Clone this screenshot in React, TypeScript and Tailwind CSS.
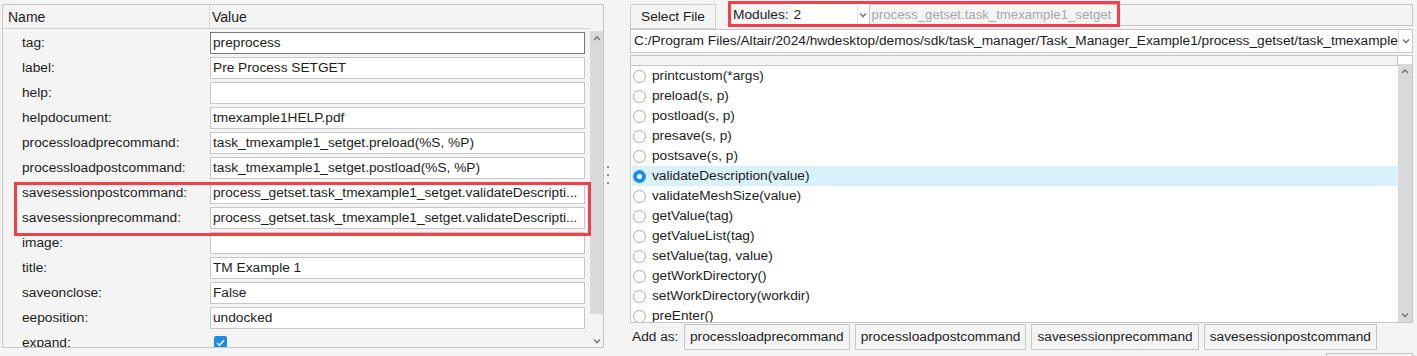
import React from "react";

const fields: { label: string; value?: string; focus?: boolean; check?: boolean }[] = [
  { label: "tag:", value: "preprocess", focus: true },
  { label: "label:", value: "Pre Process SETGET" },
  { label: "help:", value: "" },
  { label: "helpdocument:", value: "tmexample1HELP.pdf" },
  { label: "processloadprecommand:", value: "task_tmexample1_setget.preload(%S, %P)" },
  { label: "processloadpostcommand:", value: "task_tmexample1_setget.postload(%S, %P)" },
  { label: "savesessionpostcommand:", value: "process_getset.task_tmexample1_setget.validateDescripti..." },
  { label: "savesessionprecommand:", value: "process_getset.task_tmexample1_setget.validateDescripti..." },
  { label: "image:", value: "" },
  { label: "title:", value: "TM Example 1" },
  { label: "saveonclose:", value: "False" },
  { label: "eeposition:", value: "undocked" },
  { label: "expand:", check: true },
];

const methods = [
  "printcustom(*args)",
  "preload(s, p)",
  "postload(s, p)",
  "presave(s, p)",
  "postsave(s, p)",
  "validateDescription(value)",
  "validateMeshSize(value)",
  "getValue(tag)",
  "getValueList(tag)",
  "setValue(tag, value)",
  "getWorkDirectory()",
  "setWorkDirectory(workdir)",
  "preEnter()",
];

function Chevron({ up = false }: { up?: boolean }) {
  return (
    <svg width="8" height="6" viewBox="0 0 8 6">
      {up ? (
        <path d="M1 5 L4 2 L7 5" fill="none" stroke="#7a7a7a" strokeWidth="1.6" />
      ) : (
        <path d="M1 1.5 L4 4.5 L7 1.5" fill="none" stroke="#7a7a7a" strokeWidth="1.6" />
      )}
    </svg>
  );
}

function Radio({ on }: { on?: boolean }) {
  return on ? (
    <div className="w-[13px] h-[13px] rounded-full bg-[#1a8ee0] flex items-center justify-center shrink-0">
      <div className="w-[5px] h-[5px] rounded-full bg-white" />
    </div>
  ) : (
    <div className="w-[13px] h-[13px] rounded-full border border-[#a9a9a9] bg-white shrink-0" />
  );
}

export default function App() {
  return (
    <div className="relative w-[1417px] h-[356px] overflow-hidden bg-[#f4f4f4] flex font-['Liberation_Sans',Arial,sans-serif] text-[13.7px] text-[#1c1c1c] leading-none">
      {/* Left property panel */}
      <div className="ml-[2px] mt-[4px] w-[602px] h-[344px] border border-[#c6c6c6] bg-[#f4f4f4] flex shrink-0">
        <div className="w-[587px] flex flex-col overflow-hidden">
          <div className="h-[24px] border-b border-[#d4d4d4] flex items-center shrink-0 text-[14px]">
            <div className="w-[207px] pl-[5px] h-full flex items-center border-r border-[#d8d8d8]">Name</div>
            <div className="pl-[2px]">Value</div>
          </div>
          <div className="pt-[1px] flex flex-col">
            {fields.map((f, i) => (
              <div key={i} className="h-[25px] flex items-center shrink-0">
                <div className="w-[207px] pl-[19px] whitespace-nowrap">{f.label}</div>
                {f.check ? (
                  <div className="ml-[4px] w-[13px] h-[13px] rounded-[2px] bg-[#1a8ee0] flex items-center justify-center">
                    <svg width="9" height="8" viewBox="0 0 9 8">
                      <path d="M1 4 L3.5 6.3 L8 1.3" fill="none" stroke="white" strokeWidth="1.5" />
                    </svg>
                  </div>
                ) : (
                  <div
                    className={`w-[375px] h-[22px] bg-white border flex items-center px-[2px] whitespace-nowrap overflow-hidden ${
                      f.focus ? "border-[#7a7a7a]" : "border-[#c6c6c6]"
                    }`}
                  >
                    {f.value}
                  </div>
                )}
              </div>
            ))}
          </div>
        </div>
        <div className="w-[13px] flex flex-col pt-[26px]">
          <div className="h-[283px] bg-[#dadada] flex justify-center pt-[4px] shrink-0">
            <Chevron up />
          </div>
          <div className="flex-1 flex justify-center items-end pb-[3px]">
            <Chevron />
          </div>
        </div>
      </div>

      {/* Splitter */}
      <div className="w-[26px] shrink-0 flex flex-col items-start pl-[3px] pt-[166px] gap-[6px]">
        <div className="w-[2px] h-[2px] bg-[#8a8a8a]" />
        <div className="w-[2px] h-[2px] bg-[#8a8a8a]" />
        <div className="w-[2px] h-[2px] bg-[#8a8a8a]" />
      </div>

      {/* Right panel */}
      <div className="w-[783px] h-[356px] shrink-0 flex flex-col pt-[4px] overflow-hidden">
        <div className="h-[25px] flex items-start shrink-0">
          <div className="w-[86px] h-[25px] border border-[#d0d0d0] bg-[#f4f4f4] flex items-center justify-center">
            Select File
          </div>
          <div className="ml-[17px] h-[22px] flex items-center">Modules:</div>
          <div className="ml-[3px] w-[77px] h-[22px] bg-white flex items-center pl-[2px] justify-between">
            <span>2</span>
            <div className="w-[12px] h-full flex items-center justify-center border-l border-[#e0e0e0]">
              <Chevron />
            </div>
          </div>
          <div className="flex-1 h-[22px] border border-[#c6c6c6] bg-[#f4f4f4] text-[#a8a8a8] text-[13.2px] flex items-center pl-[2px]">
            process_getset.task_tmexample1_setget
          </div>
        </div>
        <div className="mt-[0px] h-[24px] shrink-0 border border-[#c6c6c6] bg-white flex items-center">
          <div className="flex-1 pl-[3px] whitespace-nowrap overflow-hidden">
            C:/Program Files/Altair/2024/hwdesktop/demos/sdk/task_manager/Task_Manager_Example1/process_getset/task_tmexample
          </div>
          <div className="w-[14px] h-full border-l border-[#dcdcdc] flex items-center justify-center">
            <Chevron />
          </div>
        </div>
        <div className="mt-[2px] h-[268px] shrink-0 border border-[#c6c6c6] bg-white flex">
          <div className="flex-1 flex flex-col overflow-hidden">
            <div className="h-[10px] bg-[#f4f4f4] border-b border-r border-[#c6c6c6] shrink-0" />
            {methods.map((m, i) => (
              <div
                key={i}
                className={`h-[20px] shrink-0 flex items-center ml-[1px] pl-[1px] gap-[6px] ${
                  i === 5 ? "bg-[#d9f1fb]" : ""
                }`}
              >
                <Radio on={i === 5} />
                <span className="whitespace-nowrap">{m}</span>
              </div>
            ))}
          </div>
          <div className="w-[14px] flex flex-col pt-[8px]">
            <div className="flex-1 bg-[#dadada] flex flex-col items-center justify-between py-[4px]">
              <Chevron up />
              <Chevron />
            </div>
          </div>
        </div>
        <div className="mt-[1px] h-[26px] shrink-0 flex items-center">
          <div className="ml-[2px] w-[52px]">Add as:</div>
          <div className="flex gap-[5px]">
            {["processloadprecommand", "processloadpostcommand", "savesessionprecommand", "savesessionpostcommand"].map(
              (b) => (
                <div key={b} className="h-[26px] px-[5px] border border-[#c6c6c6] bg-[#f4f4f4] flex items-center">
                  {b}
                </div>
              )
            )}
          </div>
        </div>
        <div className="mt-[3px] shrink-0 flex justify-end">
          <div className="w-[87px] h-[12px] border border-[#c6c6c6] bg-[#f4f4f4]" />
        </div>
      </div>

      {/* Highlight overlays */}
      <div className="absolute left-[14px] top-[182px] w-[577px] h-[54px] border-[3px] border-[#f0414a] pointer-events-none" />
      <div className="absolute left-[728px] top-[1px] w-[392px] h-[26px] border-[3px] border-[#f0414a] pointer-events-none" />
    </div>
  );
}
